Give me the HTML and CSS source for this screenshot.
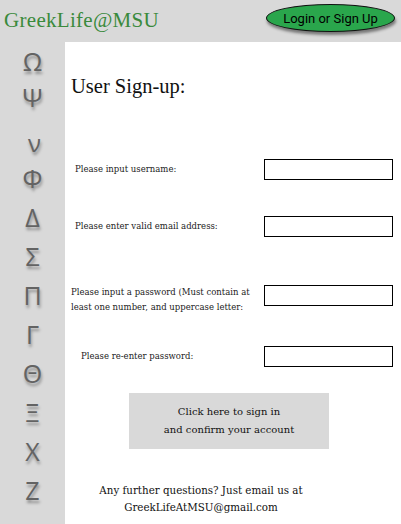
FILE: index.html
```html
<!DOCTYPE html>
<html>
<head>
<meta charset="utf-8">
<link rel="stylesheet" href="styles.css">
</head>
<body>
<header class="top">
  <div class="brand">GreekLife@MSU</div>
  <div class="login">Login or Sign Up</div>
</header>
<div class="layout">
  <nav class="side">
    <span>Ω</span><span class="psi">Ψ</span><span class="nu">ν</span><span>Φ</span><span>Δ</span><span>Σ</span><span>Π</span><span>Γ</span><span>Θ</span><span>Ξ</span><span>Χ</span><span>Ζ</span>
  </nav>
  <main class="main">
    <h1 class="title">User Sign-up:</h1>
    <div class="row r1"><label class="lab">Please input username:</label><div class="box"></div></div>
    <div class="row r2"><label class="lab">Please enter valid email address:</label><div class="box"></div></div>
    <div class="row r3"><label class="lab lab-pw">Please input a password (Must contain at least one number, and uppercase letter:</label><div class="box"></div></div>
    <div class="row r4"><label class="lab lab-re">Please re-enter password:</label><div class="box"></div></div>
    <div class="btnwrap"><div class="btn">Click here to sign in<br>and confirm your account</div></div>
    <p class="foot">Any further questions? Just email us at<br>GreekLifeAtMSU@gmail.com</p>
  </main>
</div>
</body>
</html>
```
FILE: styles.css
```css
html, body { margin: 0; padding: 0; }
body { width: 401px; height: 524px; overflow: hidden; background: #d9d9d9; font-family: "DejaVu Serif", serif; }
.top { height: 42px; display: flex; justify-content: space-between; align-items: flex-start; }
.brand { font-family: "Liberation Serif", serif; color: #3a8a3c; font-size: 21px; padding: 8px 0 0 4px; letter-spacing: 0.3px; }
.login { margin: 4px 6px 0 0; width: 127px; height: 26px; border: 1px solid #111; border-radius: 50%; background: #2aa64c; font-family: "Roboto", sans-serif; font-size: 13px; color: #000; display: flex; align-items: center; justify-content: center; box-shadow: 1px 3px 3px rgba(0,0,0,0.45); box-sizing: content-box; }
.layout { display: flex; height: 482px; }
.side { width: 65px; display: flex; flex-direction: column; align-items: center; padding-top: 0; box-sizing: border-box; }
.side span { font-family: "Open Sans", sans-serif; font-size: 25px; line-height: 39px; height: 39px; color: #636363; text-shadow: 1px 3px 3px rgba(0,0,0,0.35); }
.side .psi { margin-top: -3px; }
.side .nu { padding-left: 4px; font-size: 24px; margin-top: 6px; margin-bottom: -3px; }
.main { flex: 1; background: #fff; padding: 0; }
.title { font-family: "Liberation Serif", serif; font-weight: normal; font-size: 20.5px; margin: 0; padding: 33px 0 0 6px; height: 38px; color: #111; }
.row { display: flex; justify-content: space-between; align-items: center; padding-right: 8px; }
.lab { font-size: 8.5px; color: #222; padding-left: 10px; line-height: 15px; }
.box { width: 127px; height: 19px; border: 1px solid #000; flex: none; }
.r1 { margin-top: 46px; }
.r2 { margin-top: 36px; }
.r3 { margin-top: 48px; align-items: flex-start; }
.lab-pw { padding-left: 6px; width: 190px; line-height: 15px; margin-top: 0; }
.r4 { margin-top: 31px; }
.lab-re { padding-left: 16px; }
.btnwrap { display: flex; padding-left: 64px; margin-top: 26px; }
.btn { width: 200px; height: 56px; background: #d9d9d9; display: flex; align-items: center; justify-content: center; text-align: center; font-size: 10px; line-height: 18px; color: #111; }
.foot { margin: 33px 0 0 0; text-align: center; font-size: 10.3px; line-height: 17px; color: #111; padding-right: 64px; }
```
